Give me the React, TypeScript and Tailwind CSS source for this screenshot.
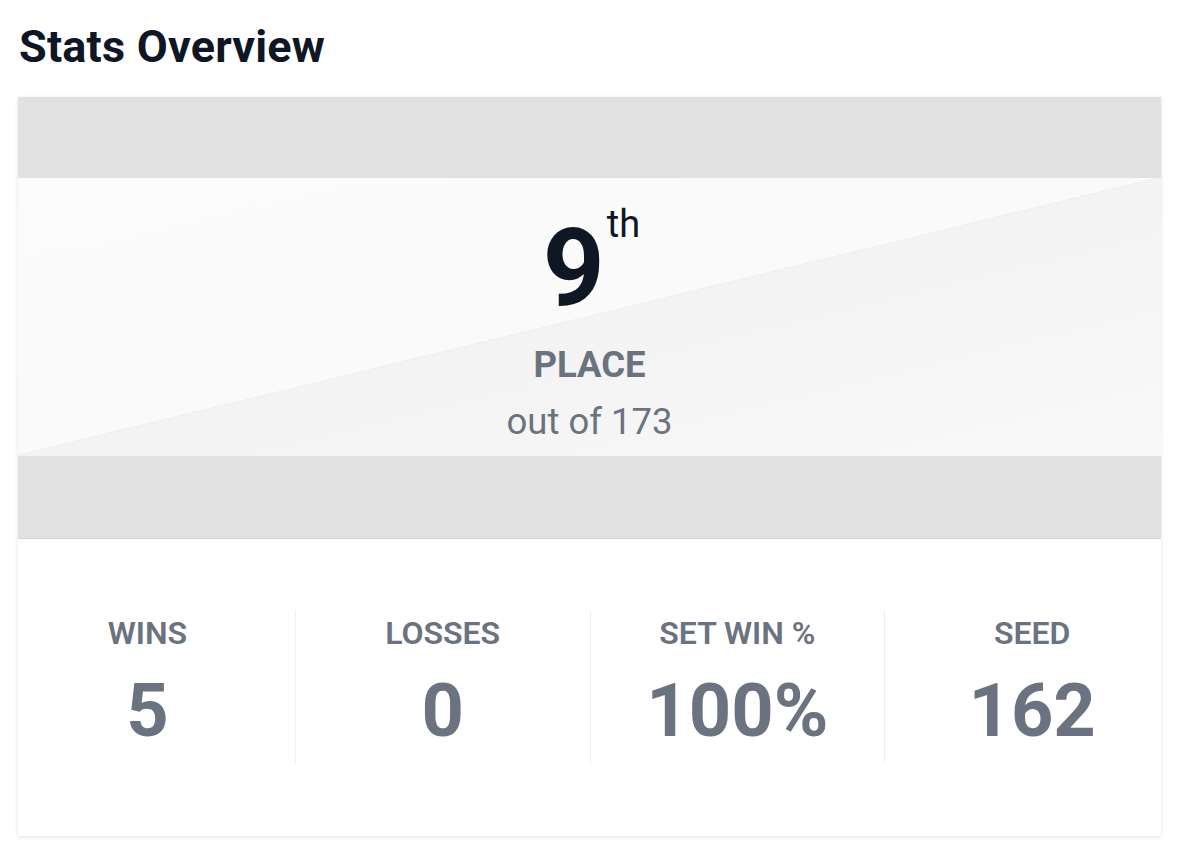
import React from "react";

const stats = [
  { label: "WINS", value: "5" },
  { label: "LOSSES", value: "0" },
  { label: "SET WIN %", value: "100%" },
  { label: "SEED", value: "162" },
];

export default function App() {
  return (
    <div className="w-[1179px] h-[844px] bg-white overflow-hidden font-['Roboto',sans-serif]">
      <h1 className="pl-[19px] pt-[21px] text-[45px] leading-[52px] font-bold text-[#0f1724] tracking-[0.2px]">
        Stats Overview
      </h1>
      <div className="mx-[18px] mt-[24px] h-[739px] flex flex-col bg-white shadow-[0_1px_4px_rgba(0,0,0,0.12)]">
        <div className="h-[81px] bg-[#e1e1e1]" />
        <div className="h-[278px] flex flex-col items-center bg-[linear-gradient(to_bottom_right,#fbfbfb_0%,#fafafa_49.7%,#ededed_49.85%,#f3f3f3_50%,#f9f9f9_100%)]">
          <div className="flex items-start mt-[34px] ml-[4px]">
            <span className="text-[108px] leading-[112px] font-bold text-[#0f1724]">9</span>
            <span className="text-[38px] leading-[40px] text-[#0f1724] ml-[2px] mt-[-8px]">th</span>
          </div>
          <div className="mt-[21px] text-[36.5px] leading-[40px] font-bold text-[#6b7280]">PLACE</div>
          <div className="mt-[17px] text-[36.5px] leading-[40px] text-[#6b7280]">out of 173</div>
        </div>
        <div className="h-[83px] bg-[#e1e1e1] border-b border-[#d6d6d6]" />
        <div className="flex-1 -mx-[18px] pt-[72px]">
          <div className="grid grid-cols-4">
            {stats.map((s, i) => (
              <div
                key={s.label}
                className={
                  "h-[152px] flex flex-col items-center " +
                  (i > 0 ? "border-l border-[#efeff1]" : "")
                }
              >
                <div className="mt-[5px] text-[32px] leading-[34px] font-semibold text-[#6b7280]">
                  {s.label}
                </div>
                <div className="mt-[23px] text-[74px] leading-[76px] font-bold text-[#6b7280]">
                  {s.value}
                </div>
              </div>
            ))}
          </div>
        </div>
      </div>
    </div>
  );
}
